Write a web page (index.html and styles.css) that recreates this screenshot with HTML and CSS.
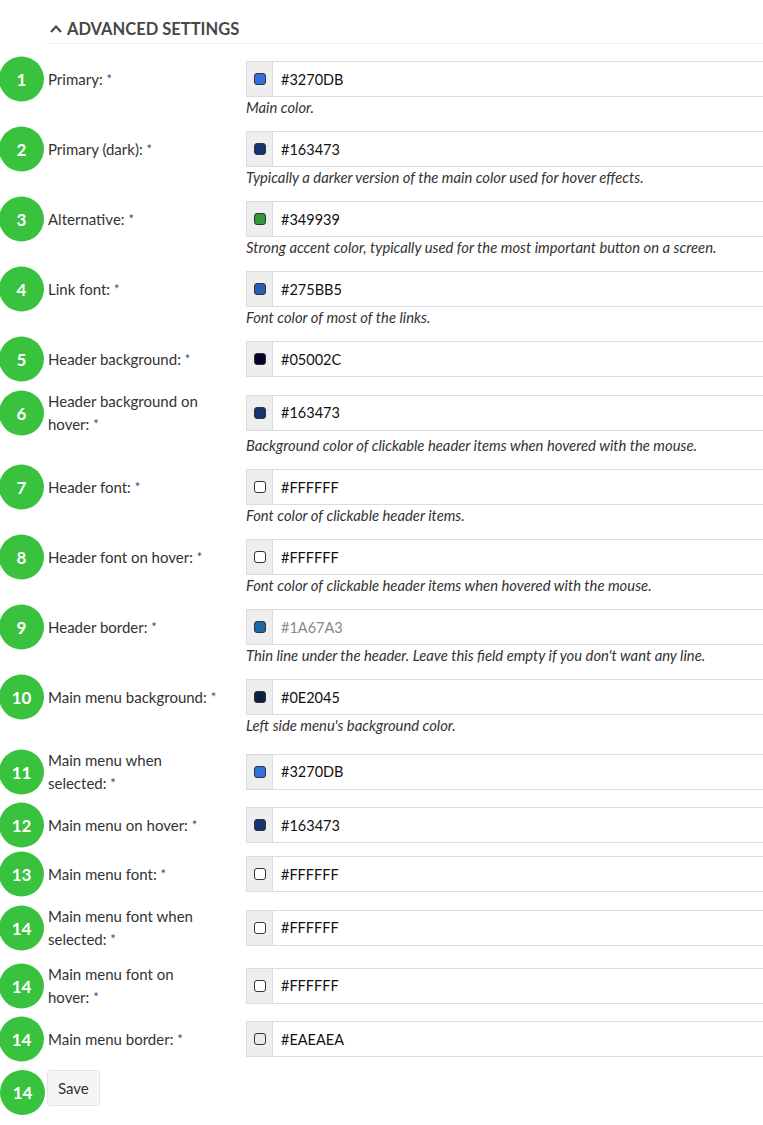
FILE: index.html
```html
<!DOCTYPE html>
<html>
<head>
<meta charset="utf-8">
<link rel="stylesheet" href="styles.css">
</head>
<body>
<div class="page">
  <div class="section-head">
    <svg class="chev" width="12" height="8" viewBox="0 0 12 8"><polyline points="1,7 6,1.5 11,7" fill="none" stroke="#444" stroke-width="2"/></svg>
    <span>ADVANCED SETTINGS</span>
  </div>

  <div class="group">
    <label class="lbl"><span class="num">1</span>Primary: <span class="req">*</span></label>
    <div class="field"><span class="addon"><i class="sw" style="background:#3270DB"></i></span><span class="val">#3270DB</span></div>
    <div class="help">Main color.</div>
  </div>

  <div class="group">
    <label class="lbl"><span class="num">2</span>Primary (dark): <span class="req">*</span></label>
    <div class="field"><span class="addon"><i class="sw" style="background:#163473"></i></span><span class="val">#163473</span></div>
    <div class="help">Typically a darker version of the main color used for hover effects.</div>
  </div>

  <div class="group">
    <label class="lbl"><span class="num">3</span>Alternative: <span class="req">*</span></label>
    <div class="field"><span class="addon"><i class="sw" style="background:#349939"></i></span><span class="val">#349939</span></div>
    <div class="help">Strong accent color, typically used for the most important button on a screen.</div>
  </div>

  <div class="group">
    <label class="lbl"><span class="num">4</span>Link font: <span class="req">*</span></label>
    <div class="field"><span class="addon"><i class="sw" style="background:#275BB5"></i></span><span class="val">#275BB5</span></div>
    <div class="help">Font color of most of the links.</div>
  </div>

  <div class="group">
    <label class="lbl"><span class="num">5</span>Header background: <span class="req">*</span></label>
    <div class="field"><span class="addon"><i class="sw" style="background:#05002C"></i></span><span class="val">#05002C</span></div>
  </div>

  <div class="group">
    <label class="lbl"><span class="num">6</span>Header background on hover: <span class="req">*</span></label>
    <div class="field"><span class="addon"><i class="sw" style="background:#163473"></i></span><span class="val">#163473</span></div>
    <div class="help">Background color of clickable header items when hovered with the mouse.</div>
  </div>

  <div class="group">
    <label class="lbl"><span class="num">7</span>Header font: <span class="req">*</span></label>
    <div class="field"><span class="addon"><i class="sw" style="background:#FFFFFF"></i></span><span class="val">#FFFFFF</span></div>
    <div class="help">Font color of clickable header items.</div>
  </div>

  <div class="group">
    <label class="lbl"><span class="num">8</span>Header font on hover: <span class="req">*</span></label>
    <div class="field"><span class="addon"><i class="sw" style="background:#FFFFFF"></i></span><span class="val">#FFFFFF</span></div>
    <div class="help">Font color of clickable header items when hovered with the mouse.</div>
  </div>

  <div class="group">
    <label class="lbl"><span class="num">9</span>Header border: <span class="req">*</span></label>
    <div class="field"><span class="addon"><i class="sw" style="background:#1A67A3"></i></span><span class="val placeholder">#1A67A3</span></div>
    <div class="help">Thin line under the header. Leave this field empty if you don't want any line.</div>
  </div>

  <div class="group">
    <label class="lbl"><span class="num">10</span>Main menu background: <span class="req">*</span></label>
    <div class="field"><span class="addon"><i class="sw" style="background:#0E2045"></i></span><span class="val">#0E2045</span></div>
    <div class="help">Left side menu's background color.</div>
  </div>

  <div class="group">
    <label class="lbl"><span class="num">11</span>Main menu when selected: <span class="req">*</span></label>
    <div class="field"><span class="addon"><i class="sw" style="background:#3270DB"></i></span><span class="val">#3270DB</span></div>
  </div>

  <div class="group">
    <label class="lbl"><span class="num">12</span>Main menu on hover: <span class="req">*</span></label>
    <div class="field"><span class="addon"><i class="sw" style="background:#163473"></i></span><span class="val">#163473</span></div>
  </div>

  <div class="group">
    <label class="lbl"><span class="num">13</span>Main menu font: <span class="req">*</span></label>
    <div class="field"><span class="addon"><i class="sw" style="background:#FFFFFF"></i></span><span class="val">#FFFFFF</span></div>
  </div>

  <div class="group">
    <label class="lbl"><span class="num">14</span>Main menu font when selected: <span class="req">*</span></label>
    <div class="field"><span class="addon"><i class="sw" style="background:#FFFFFF"></i></span><span class="val">#FFFFFF</span></div>
  </div>

  <div class="group">
    <label class="lbl"><span class="num">14</span>Main menu font on hover: <span class="req">*</span></label>
    <div class="field"><span class="addon"><i class="sw" style="background:#FFFFFF"></i></span><span class="val">#FFFFFF</span></div>
  </div>

  <div class="group">
    <label class="lbl"><span class="num">14</span>Main menu border: <span class="req">*</span></label>
    <div class="field"><span class="addon"><i class="sw" style="background:#EAEAEA"></i></span><span class="val">#EAEAEA</span></div>
  </div>

  <div class="actions">
    <span class="num num-save">14</span>
    <button class="btn" type="button">Save</button>
  </div>
</div>
</body>
</html>
```

FILE: styles.css
```css
html, body {
  margin: 0;
  padding: 0;
  background: #fff;
}

body {
  font-family: Lato, "Open Sans", sans-serif;
  font-size: 15px;
  color: #333;
  overflow-x: clip;
}

.page {
  padding-left: 47px;
  padding-bottom: 30px;
  margin-right: -20px;
}

.section-head {
  display: flex;
  align-items: center;
  gap: 5px;
  padding: 19px 0 4px 3px;
  border-bottom: 1px solid #eeeeee;
  margin-bottom: 17px;
  font-weight: 700;
  font-size: 16.5px;
  line-height: 20px;
  color: #484848;
}

.chev {
  display: block;
}

.group {
  display: grid;
  grid-template-columns: 199px 1fr;
  align-items: center;
  margin-bottom: 13px;
}

.lbl {
  position: relative;
  grid-column: 1;
  padding-left: 1px;
  padding-right: 29px;
  line-height: 22.5px;
  color: #333;
}

.req {
  color: #2d4a86;
  font-size: 13px;
  vertical-align: 1px;
}

.num {
  position: absolute;
  left: -48px;
  top: 50%;
  transform: translateY(-50%);
  width: 45px;
  height: 45px;
  border-radius: 50%;
  background: #38c23d;
  color: #fff;
  font-weight: 700;
  font-size: 17px;
  line-height: 1;
  display: flex;
  align-items: center;
  justify-content: center;
}

.field {
  grid-column: 2;
  display: flex;
  height: 36px;
  box-sizing: border-box;
  border: 1px solid #dcdcdc;
  border-right: none;
  background: #fff;
}

.addon {
  width: 25px;
  flex: none;
  background: #eeeeee;
  border-right: 1px solid #dcdcdc;
  display: flex;
  align-items: center;
  justify-content: center;
}

.sw {
  display: block;
  width: 10px;
  height: 10px;
  border: 1px solid #333;
  border-radius: 3px;
}

.val {
  display: flex;
  align-items: center;
  padding-left: 8px;
  font-size: 14.5px;
  color: #111;
}

.val.placeholder {
  color: #888;
}

.help {
  grid-column: 2;
  font-style: italic;
  font-size: 14.8px;
  line-height: 21px;
  color: #333;
}

.actions {
  position: relative;
  display: flex;
}

.num-save {
  top: 0;
  transform: none;
  left: -47px;
}

.btn {
  font-family: Lato, "Open Sans", sans-serif;
  font-size: 15px;
  color: #333;
  background: #f5f5f5;
  border: 1px solid #e3e3e3;
  border-radius: 3px;
  height: 36px;
  padding: 0 10px;
}
```
